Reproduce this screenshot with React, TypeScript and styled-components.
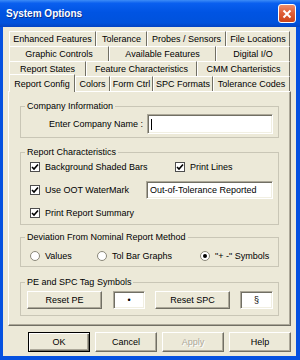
import React from 'react';
import styled, { createGlobalStyle } from 'styled-components';

const GlobalStyle = createGlobalStyle`
  html, body {
    margin: 0;
    padding: 0;
    background: #fff;
  }
  body {
    font-family: "Liberation Sans", Arial, sans-serif;
    font-size: 9px;
    color: #000;
  }
  * {
    box-sizing: border-box;
  }
`;

const Window = styled.div`
  width: 300px;
  height: 360px;
  display: flex;
  flex-direction: column;
  background: #0551e0;
  overflow: hidden;
`;

const TitleBar = styled.div`
  height: 27px;
  flex: none;
  display: flex;
  align-items: center;
  justify-content: space-between;
  padding: 0 4px 0 6px;
  background: linear-gradient(
    to bottom,
    #3d8cf7 0%,
    #0a5fef 12%,
    #0054e3 45%,
    #0052dc 85%,
    #0343c2 100%
  );
`;

const Title = styled.span`
  color: #fff;
  font-weight: bold;
  font-size: 10px;
  text-shadow: 1px 1px 0 #0a2f8c;
`;

const CloseButton = styled.div`
  width: 18px;
  height: 19px;
  border: 1px solid #fff;
  border-radius: 3px;
  background: linear-gradient(to bottom, #ee8e6c 0%, #e0603a 45%, #cc4419 100%);
  display: flex;
  align-items: center;
  justify-content: center;
`;

const Body = styled.div`
  flex: 1;
  margin: 0 4px 4px 3px;
  background: #ece9d8;
  padding: 4px 5px 4px 5px;
  display: flex;
  flex-direction: column;
`;

const TabRow = styled.div`
  display: flex;
  height: 15px;
  margin: 0 1px;
`;

const Tab = styled.div<{ $w: number; $active?: boolean }>`
  width: ${p => p.$w}px;
  height: ${p => (p.$active ? 18 : 15)}px;
  margin-top: ${p => (p.$active ? -2 : 0)}px;
  flex: none;
  align-self: flex-start;
  display: flex;
  align-items: center;
  justify-content: center;
  white-space: nowrap;
  background: #ece9d8;
  border-top: 1px solid #fff;
  border-left: 1px solid #fff;
  border-right: 1px solid #716f64;
  position: ${p => (p.$active ? 'relative' : 'static')};
  z-index: ${p => (p.$active ? 1 : 'auto')};
`;

const Panel = styled.div`
  height: 235px;
  flex: none;
  border: 1px solid;
  border-color: #fff #716f64 #716f64 #fff;
  box-shadow: inset -1px -1px 0 #aca899;
  padding: 9px 11px 0 11px;
  display: flex;
  flex-direction: column;
`;

const Group = styled.fieldset<{ $mt?: number }>`
  margin: ${p => p.$mt ?? 0}px 0 0;
  padding: 0;
  min-width: 0;
  border: 1px solid #c9c6b6;
`;

const Legend = styled.legend`
  margin-left: 4px;
  padding: 0 2px;
  line-height: 11px;
`;

const GroupBody = styled.div<{ $pad: string; $gap?: number }>`
  padding: ${p => p.$pad};
  display: flex;
  flex-direction: column;
  gap: ${p => p.$gap ?? 0}px;
`;

const Row = styled.div<{ $end?: boolean; $gap?: number }>`
  display: flex;
  align-items: center;
  justify-content: ${p => (p.$end ? 'flex-end' : 'flex-start')};
  gap: ${p => p.$gap ?? 0}px;
  min-height: 18px;
`;

const Field = styled.div<{ $w: number; $h: number; $center?: boolean; $ml?: number }>`
  width: ${p => p.$w}px;
  height: ${p => p.$h}px;
  margin-left: ${p => p.$ml ?? 0}px;
  flex: none;
  background: #fff;
  border: 1px solid;
  border-color: #aca899 #fff #fff #aca899;
  box-shadow: inset 1px 1px 0 #716f64, inset -1px -1px 0 #f1efe2;
  display: flex;
  align-items: center;
  justify-content: ${p => (p.$center ? 'center' : 'flex-start')};
  padding: 0 3px;
  white-space: nowrap;
`;

const Caret = styled.span`
  width: 1px;
  height: 11px;
  background: #000;
`;

const CheckItem = styled.label<{ $w?: number }>`
  display: flex;
  align-items: center;
  gap: 5px;
  width: ${p => (p.$w ? `${p.$w}px` : 'auto')};
  flex: none;
  white-space: nowrap;
`;

const Box = styled.span`
  width: 10px;
  height: 10px;
  flex: none;
  background: #fff;
  border: 1px solid #4d4d4d;
  display: flex;
  align-items: center;
  justify-content: center;
`;

const Radio = styled.span<{ $on?: boolean }>`
  width: 10px;
  height: 10px;
  flex: none;
  border-radius: 50%;
  background: #fff;
  border: 1px solid #8a8778;
  display: flex;
  align-items: center;
  justify-content: center;
  &::after {
    content: '';
    width: 4px;
    height: 4px;
    border-radius: 50%;
    background: ${p => (p.$on ? '#000' : 'transparent')};
  }
`;

const Button = styled.div<{ $w: number; $h?: number; $ml?: number; $default?: boolean; $disabled?: boolean }>`
  width: ${p => p.$w}px;
  height: ${p => p.$h ?? 18}px;
  margin-left: ${p => p.$ml ?? 0}px;
  flex: none;
  display: flex;
  align-items: center;
  justify-content: center;
  background: #ece9d8;
  border: 1px solid;
  border-color: ${p => (p.$default ? '#000' : '#fff #716f64 #716f64 #fff')};
  box-shadow: ${p =>
    p.$default
      ? 'inset 1px 1px 0 #fff, inset -1px -1px 0 #716f64, inset -2px -2px 0 #aca899'
      : 'inset -1px -1px 0 #aca899'};
  color: ${p => (p.$disabled ? '#aca899' : '#000')};
  text-shadow: ${p => (p.$disabled ? '1px 1px 0 #fff' : 'none')};
`;

const ButtonBar = styled.div`
  display: flex;
  justify-content: flex-end;
  gap: 5px;
  margin-top: 6px;
`;

const Check = () => (
  <Box>
    <svg width="8" height="8" viewBox="0 0 8 8">
      <polyline points="1,4 3,6 7,1.5" fill="none" stroke="#000" strokeWidth="1.6" />
    </svg>
  </Box>
);

const rows: { label: string; w: number; active?: boolean }[][] = [
  [
    { label: 'Enhanced Features', w: 87 },
    { label: 'Tolerance', w: 51 },
    { label: 'Probes / Sensors', w: 79 },
    { label: 'File Locations', w: 64 },
  ],
  [
    { label: 'Graphic Controls', w: 100 },
    { label: 'Available Features', w: 107 },
    { label: 'Digital I/O', w: 74 },
  ],
  [
    { label: 'Report States', w: 77 },
    { label: 'Feature Characteristics', w: 111 },
    { label: 'CMM Charteristics', w: 93 },
  ],
  [
    { label: 'Report Config', w: 66, active: true },
    { label: 'Colors', w: 35 },
    { label: 'Form Ctrl', w: 43 },
    { label: 'SPC Formats', w: 60 },
    { label: 'Tolerance Codes', w: 77 },
  ],
];

export default function App() {
  return (
    <>
      <GlobalStyle />
      <Window>
        <TitleBar>
          <Title>System Options</Title>
          <CloseButton>
            <svg width="10" height="10" viewBox="0 0 10 10">
              <path d="M1.5 1.5 L8.5 8.5 M8.5 1.5 L1.5 8.5" stroke="#fff" strokeWidth="2" />
            </svg>
          </CloseButton>
        </TitleBar>
        <Body>
          {rows.map((row, i) => (
            <TabRow key={i}>
              {row.map(t => (
                <Tab key={t.label} $w={t.w} $active={t.active}>
                  {t.label}
                </Tab>
              ))}
            </TabRow>
          ))}
          <Panel>
            <Group>
              <Legend>Company Information</Legend>
              <GroupBody $pad="2px 5px 3px 6px">
                <Row $end $gap={4}>
                  <span>Enter Company Name :</span>
                  <Field $w={126} $h={20}>
                    <Caret />
                  </Field>
                </Row>
              </GroupBody>
            </Group>

            <Group $mt={9}>
              <Legend>Report Characteristics</Legend>
              <GroupBody $pad="0 5px 2px 9px" $gap={5}>
                <Row>
                  <CheckItem $w={145}>
                    <Check />
                    Background Shaded Bars
                  </CheckItem>
                  <CheckItem>
                    <Check />
                    Print Lines
                  </CheckItem>
                </Row>
                <Row>
                  <CheckItem $w={116}>
                    <Check />
                    Use OOT WaterMark
                  </CheckItem>
                  <Field $w={127} $h={18}>
                    Out-of-Tolerance Reported
                  </Field>
                </Row>
                <Row>
                  <CheckItem>
                    <Check />
                    Print Report Summary
                  </CheckItem>
                </Row>
              </GroupBody>
            </Group>

            <Group $mt={7}>
              <Legend>Deviation From Nominal Report Method</Legend>
              <GroupBody $pad="4px 5px 1px 9px">
                <Row>
                  <CheckItem $w={67}>
                    <Radio />
                    Values
                  </CheckItem>
                  <CheckItem $w={103}>
                    <Radio />
                    Tol Bar Graphs
                  </CheckItem>
                  <CheckItem>
                    <Radio $on />
                    "+ -" Symbols
                  </CheckItem>
                </Row>
              </GroupBody>
            </Group>

            <Group $mt={10}>
              <Legend>PE and SPC Tag Symbols</Legend>
              <GroupBody $pad="3px 5px 6px 6px">
                <Row>
                  <Button $w={75}>Reset PE</Button>
                  <Field $w={32} $h={18} $ml={11} $center>
                    •
                  </Field>
                  <Button $w={75} $ml={10}>
                    Reset SPC
                  </Button>
                  <Field $w={33} $h={18} $ml={10} $center>
                    §
                  </Field>
                </Row>
              </GroupBody>
            </Group>
          </Panel>
          <ButtonBar>
            <Button $w={62} $h={20} $default>
              OK
            </Button>
            <Button $w={62} $h={20}>
              Cancel
            </Button>
            <Button $w={62} $h={20} $disabled>
              Apply
            </Button>
            <Button $w={62} $h={20}>
              Help
            </Button>
          </ButtonBar>
        </Body>
      </Window>
    </>
  );
}
